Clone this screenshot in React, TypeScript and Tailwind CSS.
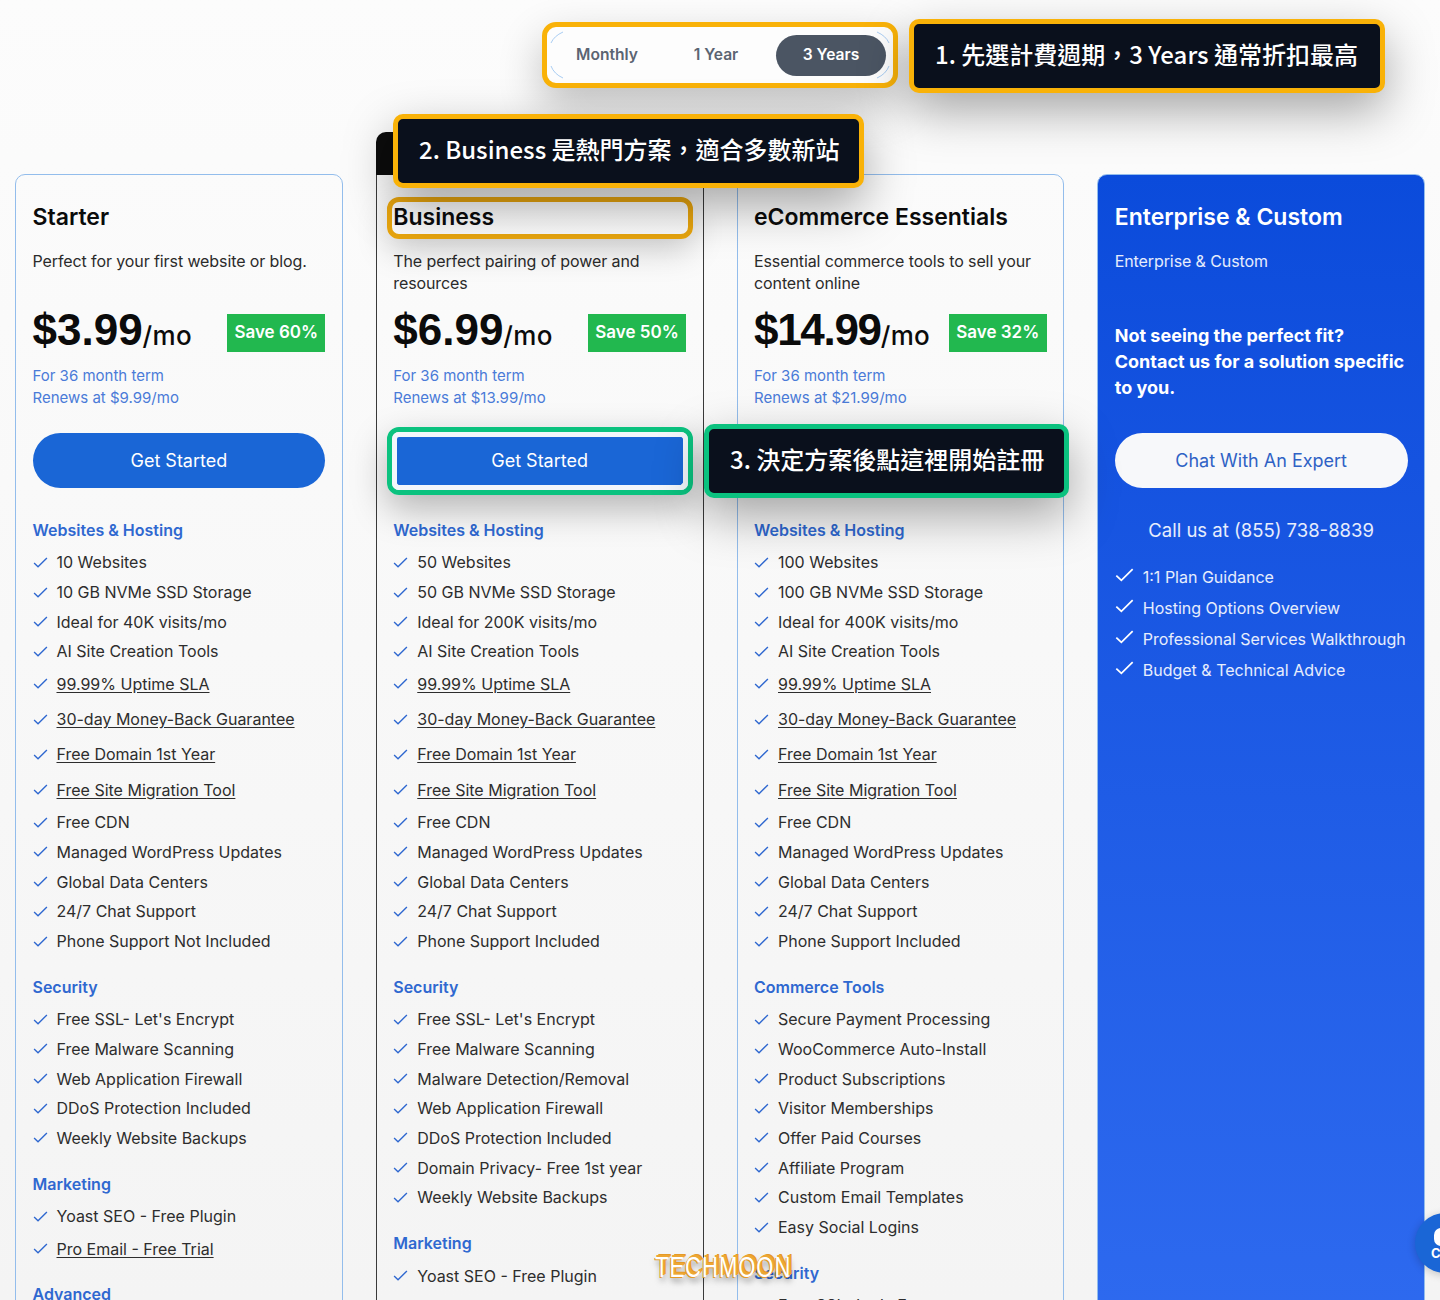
const sans = "font-['Inter',sans-serif]"
const cjk = "font-['Noto_Sans_CJK_TC',sans-serif]"

type Feature = { text: string; link?: boolean }
type Section = { title: string; items: Feature[]; tight?: boolean }
type Plan = {
  name: string
  desc: string
  price: string
  save: string
  renews: string
  sections: Section[]
  popular?: boolean
}

const plain = (...list: string[]): Feature[] => list.map((text) => ({ text }))
const links = (...list: string[]): Feature[] => list.map((text) => ({ text, link: true }))

const hosting = (sites: string, visits: string, phone: string): Section => ({
  title: "Websites & Hosting",
  items: [
    ...plain(`${sites} Websites`, `${sites} GB NVMe SSD Storage`, `Ideal for ${visits} visits/mo`, "AI Site Creation Tools"),
    ...links("99.99% Uptime SLA", "30-day Money-Back Guarantee", "Free Domain 1st Year", "Free Site Migration Tool"),
    ...plain("Free CDN", "Managed WordPress Updates", "Global Data Centers", "24/7 Chat Support", phone),
  ],
})

const plans: Plan[] = [
  {
    name: "Starter",
    desc: "Perfect for your first website or blog.",
    price: "$3.99",
    save: "Save 60%",
    renews: "Renews at $9.99/mo",
    sections: [
      hosting("10", "40K", "Phone Support Not Included"),
      {
        title: "Security",
        items: plain("Free SSL- Let's Encrypt", "Free Malware Scanning", "Web Application Firewall", "DDoS Protection Included", "Weekly Website Backups"),
      },
      {
        title: "Marketing",
        items: [...plain("Yoast SEO - Free Plugin"), ...links("Pro Email - Free Trial")],
      },
      { title: "Advanced", items: [], tight: true },
    ],
  },
  {
    name: "Business",
    desc: "The perfect pairing of power and resources",
    price: "$6.99",
    save: "Save 50%",
    renews: "Renews at $13.99/mo",
    popular: true,
    sections: [
      hosting("50", "200K", "Phone Support Included"),
      {
        title: "Security",
        items: plain("Free SSL- Let's Encrypt", "Free Malware Scanning", "Malware Detection/Removal", "Web Application Firewall", "DDoS Protection Included", "Domain Privacy- Free 1st year", "Weekly Website Backups"),
      },
      { title: "Marketing", items: plain("Yoast SEO - Free Plugin") },
    ],
  },
  {
    name: "eCommerce Essentials",
    desc: "Essential commerce tools to sell your content online",
    price: "$14.99",
    save: "Save 32%",
    renews: "Renews at $21.99/mo",
    sections: [
      hosting("100", "400K", "Phone Support Included"),
      {
        title: "Commerce Tools",
        items: plain("Secure Payment Processing", "WooCommerce Auto-Install", "Product Subscriptions", "Visitor Memberships", "Offer Paid Courses", "Affiliate Program", "Custom Email Templates", "Easy Social Logins"),
      },
      { title: "Security", items: plain("Free SSL- Let's Encrypt") },
    ],
  },
]

function Tick({ className }: { className: string }) {
  return (
    <svg viewBox="0 0 16 12" fill="none" stroke="currentColor" strokeWidth="1.5" className={className}>
      <path d="M1 6.5 5.3 10.6 15 1" />
    </svg>
  )
}

function FeatureRow({ text, link }: Feature) {
  return (
    <li className={`flex items-center ${link ? "h-[35.3px]" : "h-[29.7px]"}`}>
      <Tick className="mr-[9px] h-[11px] w-[15px] shrink-0 text-[#2f68d0]" />
      <span className={`text-[16px] text-[#2d2d2d] ${link ? "underline underline-offset-2" : ""}`}>{text}</span>
    </li>
  )
}

function PlanCard({ plan }: { plan: Plan }) {
  return (
    <div className={`relative h-[1200px] rounded-[10px] border px-[16.5px] pt-[27px] ${plan.popular ? "rounded-t-none border-[#3a3a3a]" : "border-[#93bdec]"}`}>
      {plan.popular && <div className="absolute -left-px -right-px top-[-43px] h-[43px] rounded-t-[10px] bg-[#0c0c0c]" />}
      <h2 className="h-[30px] text-[23px] leading-[30px] font-semibold text-[#0b0b0b]">{plan.name}</h2>
      <p className="mt-[18px] h-[44px] text-[16px] leading-[22px] tracking-[-0.1px] text-[#2b2b2b]">{plan.desc}</p>
      <div className="mt-[20px] flex h-[38px] items-center justify-between">
        <div className="flex items-baseline text-[#0b0b0b]">
          <span className={`font-['Liberation_Sans',sans-serif] text-[44px] font-bold leading-[38px] ${plan.price.length > 5 ? "tracking-[-1.3px]" : ""}`}>{plan.price}</span>
          <span className="text-[26px] font-medium leading-[38px] tracking-[0.3px]">/mo</span>
        </div>
        <span className="flex h-[38px] w-[98px] items-center justify-center bg-[#22b84f] text-[17px] font-semibold text-white">{plan.save}</span>
      </div>
      <p className="mt-[13px] text-[15px] leading-[22px] text-[#4a7bd8]">
        For 36 month term
        <br />
        {plan.renews}
      </p>
      <button className={`mt-[24px] h-[55px] w-full bg-[#1a66d6] text-[18px] text-white ${plan.popular ? "rounded-[14px]" : "rounded-full"}`}>Get Started</button>
      <div className="mt-[30px]">
        {plan.sections.map((section, i) => (
          <div key={section.title} className={i === 0 ? "" : section.tight ? "mt-[16px]" : "mt-[19px]"}>
            <h3 className="h-[24px] text-[16px] leading-[24px] font-semibold text-[#2f68d0]">{section.title}</h3>
            <ul className="mt-[5.5px]">
              {section.items.map((item) => (
                <FeatureRow key={item.text} {...item} />
              ))}
            </ul>
          </div>
        ))}
      </div>
    </div>
  )
}

function EnterpriseCard() {
  const list = ["1:1 Plan Guidance", "Hosting Options Overview", "Professional Services Walkthrough", "Budget & Technical Advice"]
  return (
    <div className="h-[1200px] rounded-[10px] border border-[#93bdec] bg-gradient-to-b from-[#0b4bdb] to-[#2f6bf0] px-[16.5px] pt-[27px] text-white">
      <h2 className="h-[30px] text-[23px] leading-[30px] font-semibold">Enterprise &amp; Custom</h2>
      <p className="mt-[18px] h-[44px] text-[16px] leading-[22px] tracking-[-0.1px] text-white/90">Enterprise &amp; Custom</p>
      <p className="mt-[29px] text-[18px] leading-[26px] font-bold">Not seeing the perfect fit? Contact us for a solution specific to you.</p>
      <button className="mt-[32px] h-[55px] w-full rounded-full bg-[#f7f8fa] text-[18px] text-[#2f62c5]">Chat With An Expert</button>
      <p className="mt-[28px] text-center text-[18.5px] leading-[28px] text-white/90">Call us at (855) 738-8839</p>
      <ul className="mt-[17px]">
        {list.map((item) => (
          <li key={item} className="flex h-[31px] items-center">
            <Tick className="mb-[4px] mr-[9px] h-[14px] w-[19px] shrink-0 text-white" />
            <span className="text-[16px] text-white/90">{item}</span>
          </li>
        ))}
      </ul>
    </div>
  )
}

function Callout({ className, children }: { className: string; children: string }) {
  return (
    <div className={`absolute z-20 flex h-[74px] items-center rounded-[10px] border-[5px] bg-[#0a101c] pb-[5px] pl-[21px] text-[24px] font-medium whitespace-nowrap text-white shadow-[0_18px_48px_rgba(0,0,0,0.34)] ${cjk} ${className}`}>
      {children}
    </div>
  )
}

export default function App() {
  return (
    <div className={`relative h-[1300px] w-[1440px] overflow-hidden bg-gradient-to-b from-[#fcfcfc] to-[#f4f4f4] ${sans}`}>
      {/* Billing toggle */}
      <div className="flex h-[174px] justify-end pt-[22px] pr-[542px]">
        <div className="h-[66px] w-[356px] rounded-[14px] border-[5px] border-[#f9b208] bg-[#fdfdfd] shadow-[0_18px_44px_rgba(0,0,0,0.24)]">
          <div className="relative flex h-[56px] items-center pl-[6px] text-[15.6px] font-semibold text-[#5b6472]">
            <svg viewBox="0 0 346 56" fill="none" stroke="#a9cdf3" strokeWidth="1" className="absolute inset-0 h-[56px] w-[346px]">
              <path d="M16 5Q7 9 4 16M4 39Q7 47 16 51M330 5Q339 9 342 16M342 39Q339 47 330 51" />
            </svg>
            <span className="w-[108px] text-center">Monthly</span>
            <span className="w-[110px] text-center">1 Year</span>
            <span className="relative ml-[5px] flex h-[41px] w-[110px] items-center justify-center rounded-full bg-[#4b5563] text-white">3 Years</span>
          </div>
        </div>
      </div>

      {/* Plans */}
      <div className="grid grid-cols-4 gap-[33px] px-[15px]">
        {plans.map((plan) => (
          <PlanCard key={plan.name} plan={plan} />
        ))}
        <EnterpriseCard />
      </div>

      {/* Tutorial annotations */}
      <Callout className="top-[19px] left-[909px] w-[476px] border-[#f9b208]">1. 先選計費週期，3 Years 通常折扣最高</Callout>
      <Callout className="top-[114px] left-[393px] w-[471px] border-[#f9b208]">2. Business 是熱門方案，適合多數新站</Callout>
      <Callout className="top-[424px] left-[704px] w-[365px] border-[#0bc27f]">3. 決定方案後點這裡開始註冊</Callout>
      <div className="absolute top-[197px] left-[387px] z-10 h-[42px] w-[306px] rounded-[12px] border-[5px] border-[#e8a50e] shadow-[0_12px_32px_rgba(0,0,0,0.18)]" />
      <div className="absolute top-[427px] left-[387px] z-10 h-[68px] w-[306px] rounded-[12px] border-[5px] border-[#0bc27f] shadow-[0_14px_36px_rgba(0,0,0,0.28)]">
        <div className="h-full w-full rounded-[7px] border-[5px] border-[#f3f6fb]" />
      </div>

      {/* Watermark */}
      <div className="absolute top-[1252px] left-[655px] z-30 origin-top scale-y-[1.3] font-['Liberation_Sans',sans-serif] text-[22px] leading-[24px] tracking-[1px] text-white [text-shadow:1px_-1px_0_#eda634,2px_-1px_0_#eda634,3px_-2px_0_#e59a26,-1px_1px_0_#e59a26,1px_3px_6px_rgba(0,0,0,0.55)]">
        TECHMOON
      </div>

      {/* Chat widget */}
      <div className="absolute top-[1213px] left-[1415px] z-30 h-[60px] w-[60px] rounded-full bg-[#1a66d6] shadow-[0_2px_8px_rgba(0,0,0,0.2)]">
        <div className="absolute top-[15px] left-[19px] h-[18px] w-[14px] rounded-full bg-white" />
        <span className="absolute top-[31px] left-[16px] text-[13px] font-bold text-white">C</span>
      </div>
    </div>
  )
}
